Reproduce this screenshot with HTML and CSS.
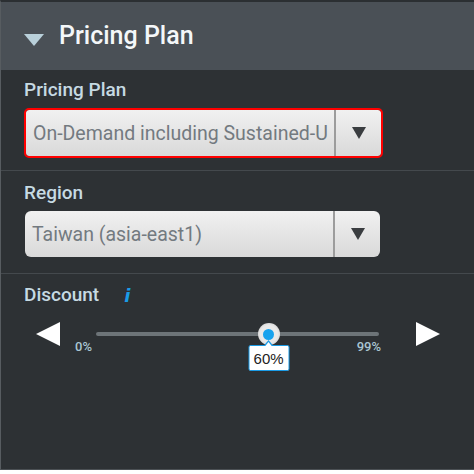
FILE: index.html
```html
<!DOCTYPE html>
<html>
<head>
<meta charset="utf-8">
<link rel="stylesheet" href="styles.css">
</head>
<body>
<div class="panel">
  <div class="header">
    <span class="caret"></span>
    <span class="title">Pricing Plan</span>
  </div>
  <div class="section s1">
    <div class="label">Pricing Plan</div>
    <div class="select focused">
      <span class="value">On-Demand including Sustained-U</span>
      <span class="btn"><span class="tri"></span></span>
    </div>
  </div>
  <div class="section s2">
    <div class="label">Region</div>
    <div class="select">
      <span class="value">Taiwan (asia-east1)</span>
      <span class="btn"><span class="tri"></span></span>
    </div>
  </div>
  <div class="section s3">
    <div class="label-row">
      <span class="label">Discount</span>
      <span class="info">i</span>
    </div>
    <div class="slider">
      <span class="arrow left"></span>
      <div class="track-area">
        <div class="track">
          <div class="thumb" style="left: 61%"><span class="dot"></span>
            <div class="tip">60%</div>
          </div>
        </div>
        <div class="ticks"><span>0%</span><span>99%</span></div>
      </div>
      <span class="arrow right"></span>
    </div>
  </div>
</div>
</body>
</html>
```
FILE: styles.css
```css
html, body {
  margin: 0;
  padding: 0;
  background: #ffffff;
}
body {
  font-family: Roboto, "Liberation Sans", sans-serif;
}
.panel {
  width: 473px;
  height: 467px;
  background: #2d3134;
  border-top: 2px solid #2b2f32;
  border-left: 1px solid #575c60;
  border-bottom: 1px solid #4b5054;
  display: flex;
  flex-direction: column;
}
.header {
  height: 68px;
  flex: none;
  background: #4a5056;
  display: flex;
  align-items: center;
  box-sizing: border-box;
  padding-left: 23px;
}
.caret {
  width: 0;
  height: 0;
  border-left: 10px solid transparent;
  border-right: 10px solid transparent;
  border-top: 12px solid #b9d0da;
  margin-top: 7px;
}
.title {
  margin-left: 15px;
  color: #f4f7f9;
  font-size: 25px;
  font-weight: 500;
  margin-top: -2px;
}
.section {
  padding: 0 0 0 23px;
  border-bottom: 1px solid #44494d;
  flex: none;
}
.s1 {
  height: 101px;
  box-sizing: border-box;
  padding-top: 9px;
}
.s2 {
  height: 103px;
  box-sizing: border-box;
  padding-top: 11px;
}
.s3 {
  border-bottom: none;
  padding-top: 10px;
}
.label {
  color: #c6dae3;
  font-size: 19px;
  font-weight: 500;
  line-height: 22px;
}
.select {
  margin-top: 7px;
  width: 355px;
  height: 46px;
  box-sizing: border-box;
  border-radius: 6px;
  background: linear-gradient(#f1f1f1, #d9d9d9);
  display: flex;
  align-items: center;
  overflow: hidden;
}
.select.focused {
  margin-left: 2px;
  outline: 2px solid #ff0000;
  outline-offset: 0;
  margin-top: 9px;
  border-radius: 3px;
}
.s2 .select {
  margin-left: 1px;
}
.value {
  flex: 1;
  min-width: 0;
  white-space: nowrap;
  color: #737a80;
  font-size: 19.5px;
  padding-left: 7px;
}
.btn {
  width: 47px;
  height: 100%;
  border-left: 2px solid #9c9c9c;
  display: flex;
  align-items: center;
  justify-content: center;
  box-sizing: border-box;
}
.tri {
  width: 0;
  height: 0;
  border-left: 7px solid transparent;
  border-right: 7px solid transparent;
  border-top: 12px solid #3a3d40;
}
.label-row {
  display: flex;
  align-items: center;
}
.info {
  margin-left: 25px;
  color: #1a9be6;
  font-style: italic;
  font-weight: 700;
  font-size: 18px;
  font-family: "DejaVu Sans", sans-serif;
}
.slider {
  display: flex;
  align-items: flex-start;
  margin-top: 16px;
  padding-left: 12px;
}
.arrow {
  width: 0;
  height: 0;
  border-top: 12px solid transparent;
  border-bottom: 12px solid transparent;
  margin-top: 0;
}
.arrow.left {
  border-right: 24px solid #ffffff;
}
.arrow.right {
  border-left: 24px solid #ffffff;
  margin-left: 35px;
}
.track-area {
  width: 306px;
  margin-left: 15px;
  padding-top: 10px;
}
.track {
  position: relative;
  margin-left: 21px;
  margin-right: 2px;
  height: 4px;
  border-radius: 2px;
  background: #6d7478;
}
.thumb {
  position: absolute;
  top: 2px;
  width: 22px;
  height: 22px;
  margin-left: -11px;
  margin-top: -11px;
  border-radius: 50%;
  background: radial-gradient(#e9e9e9 55%, #bdbdbd);
  display: flex;
  align-items: center;
  justify-content: center;
}
.dot {
  width: 11px;
  height: 11px;
  border-radius: 50%;
  background: #16a2ee;
}
.tip {
  position: absolute;
  top: 22px;
  left: 50%;
  transform: translateX(-50%);
  width: 41px;
  height: 26px;
  box-sizing: border-box;
  background: #ffffff;
  border: 1px solid #1a9be6;
  border-radius: 2px;
  color: #222;
  font-size: 15px;
  font-family: "Liberation Sans", sans-serif;
  display: flex;
  align-items: center;
  justify-content: center;
}
.tip::before {
  content: "";
  position: absolute;
  top: -6px;
  left: 50%;
  margin-left: -5px;
  border-left: 5px solid transparent;
  border-right: 5px solid transparent;
  border-bottom: 6px solid #1a9be6;
}
.tip::after {
  content: "";
  position: absolute;
  top: -4px;
  left: 50%;
  margin-left: -4px;
  border-left: 4px solid transparent;
  border-right: 4px solid transparent;
  border-bottom: 5px solid #ffffff;
}
.ticks {
  display: flex;
  justify-content: space-between;
  margin-top: 3px;
  color: #a9c6d3;
  font-size: 13px;
  font-weight: 500;
}
```
